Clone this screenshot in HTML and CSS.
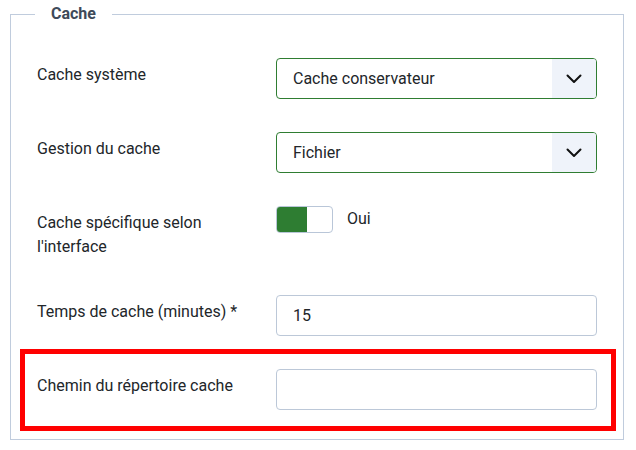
FILE: index.html
```html
<!DOCTYPE html>
<html lang="fr">
<head>
<meta charset="utf-8">
<title>Cache</title>
<link rel="stylesheet" href="styles.css">
</head>
<body>
<fieldset class="options">
  <legend class="legend">Cache</legend>

  <div class="row">
    <label class="lbl">Cache système</label>
    <div class="select">
      <span class="val">Cache conservateur</span>
      <span class="arrow"><svg width="16" height="10" viewBox="0 0 16 10"><path d="M1.5 1.5 L8 8 L14.5 1.5" fill="none" stroke="#111" stroke-width="2" stroke-linecap="round" stroke-linejoin="round"/></svg></span>
    </div>
  </div>

  <div class="row">
    <label class="lbl">Gestion du cache</label>
    <div class="select">
      <span class="val">Fichier</span>
      <span class="arrow"><svg width="16" height="10" viewBox="0 0 16 10"><path d="M1.5 1.5 L8 8 L14.5 1.5" fill="none" stroke="#111" stroke-width="2" stroke-linecap="round" stroke-linejoin="round"/></svg></span>
    </div>
  </div>

  <div class="row">
    <label class="lbl">Cache spécifique selon l'interface</label>
    <div class="switch-wrap">
      <span class="switch"><span class="knob"></span></span>
      <span class="switch-label">Oui</span>
    </div>
  </div>

  <div class="row">
    <label class="lbl">Temps de cache (minutes) *</label>
    <input class="field" type="text" value="15">
  </div>

  <div class="row row-last highlight">
    <label class="lbl">Chemin du répertoire cache</label>
    <input class="field" type="text" value="">
  </div>
</fieldset>
</body>
</html>
```
FILE: styles.css
```css
html, body {
  margin: 0;
  padding: 0;
  background: #ffffff;
}

body {
  font-family: Roboto, "Liberation Sans", Arial, sans-serif;
  font-size: 16px;
  line-height: 24px;
  color: #22262a;
}

.options {
  margin: 2px 12px 0 10px;
  padding: 32px 26px 29px 26px;
  border: 1px solid #c0ccdd;
  min-width: 0;
}

.legend {
  margin-left: -2px;
  padding: 0 16px;
  font-size: 16px;
  line-height: 24px;
  font-weight: 700;
  color: #3e4a59;
}

.row {
  display: grid;
  grid-template-columns: 239px 321px;
  align-items: start;
  margin-bottom: 33px;
}

.row-last {
  margin-bottom: 0;
}

.highlight {
  position: relative;
}

.highlight::after {
  content: "";
  position: absolute;
  left: -17px;
  right: -19px;
  top: -20px;
  bottom: -21px;
  border: 5px solid #ff0000;
  pointer-events: none;
}

.lbl {
  padding: 5px 20px 3px 0;
  color: #22262a;
}

.select {
  box-sizing: border-box;
  height: 41px;
  display: flex;
  align-items: center;
  border: 1px solid #2f7d32;
  border-radius: 4px;
  overflow: hidden;
  background: #ffffff;
}

.val {
  flex: 1;
  padding-left: 16px;
  color: #22262a;
}

.arrow {
  width: 44px;
  height: 100%;
  display: flex;
  align-items: center;
  justify-content: center;
  background: #eff3fa;
}

.arrow svg {
  display: block;
  margin-top: 1px;
}

.switch-wrap {
  display: flex;
  align-items: flex-start;
  gap: 14px;
}

.switch {
  box-sizing: border-box;
  width: 57px;
  height: 27px;
  border: 1px solid #b9c6d8;
  border-radius: 4px;
  overflow: hidden;
  display: flex;
  background: #ffffff;
}

.knob {
  width: 30px;
  height: 100%;
  background: #2e7d32;
}

.switch-label {
  color: #22262a;
  line-height: 24px;
  padding-top: 1px;
}

.field {
  box-sizing: border-box;
  width: 321px;
  height: 41px;
  margin: 0;
  padding: 0 16px;
  border: 1px solid #bcc8d8;
  border-radius: 4px;
  font-family: Roboto, "Liberation Sans", Arial, sans-serif;
  font-size: 16px;
  color: #22262a;
  background: #ffffff;
  outline: none;
}
```
